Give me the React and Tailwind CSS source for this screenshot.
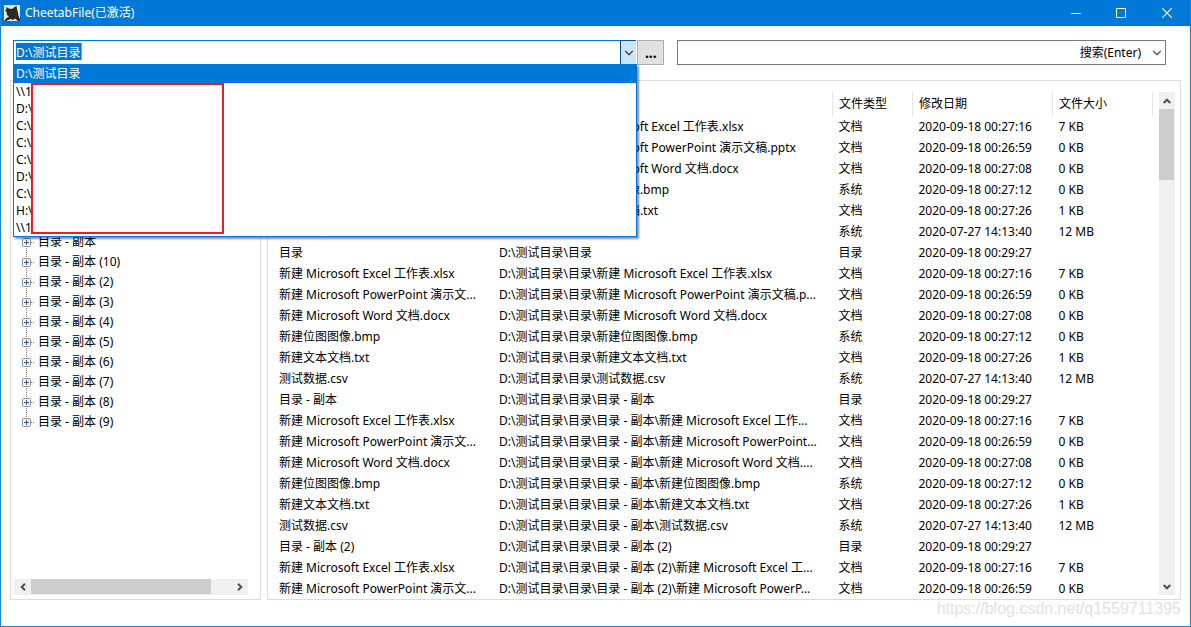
import { ChevronDown } from "lucide-react";

const ROOT = "D:\\测试目录\\";

const history = ["\\\\1", "D:\\", "C:\\", "C:\\", "C:\\", "D:\\", "C:\\", "H:\\", "\\\\1"];

const folders = [
  "目录 - 副本",
  "目录 - 副本 (10)",
  "目录 - 副本 (2)",
  "目录 - 副本 (3)",
  "目录 - 副本 (4)",
  "目录 - 副本 (5)",
  "目录 - 副本 (6)",
  "目录 - 副本 (7)",
  "目录 - 副本 (8)",
  "目录 - 副本 (9)",
];

const XLSX = ["文档", "2020-09-18 00:27:16", "7 KB"];
const PPTX = ["文档", "2020-09-18 00:26:59", "0 KB"];
const DOCX = ["文档", "2020-09-18 00:27:08", "0 KB"];
const BMP = ["系统", "2020-09-18 00:27:12", "0 KB"];
const TXT = ["文档", "2020-09-18 00:27:26", "1 KB"];
const CSV = ["系统", "2020-07-27 14:13:40", "12 MB"];
const DIR = ["目录", "2020-09-18 00:29:27", ""];

const files = [
  ["新建 Microsoft Excel 工作表.xlsx", "新建 Microsoft Excel 工作表.xlsx", XLSX],
  ["新建 Microsoft PowerPoint 演示文...", "新建 Microsoft PowerPoint 演示文稿.pptx", PPTX],
  ["新建 Microsoft Word 文档.docx", "新建 Microsoft Word 文档.docx", DOCX],
  ["新建位图图像.bmp", "新建位图图像.bmp", BMP],
  ["新建文本文档.txt", "新建文本文档.txt", TXT],
  ["测试数据.csv", "测试数据.csv", CSV],
  ["目录", "目录", DIR],
  ["新建 Microsoft Excel 工作表.xlsx", "目录\\新建 Microsoft Excel 工作表.xlsx", XLSX],
  ["新建 Microsoft PowerPoint 演示文...", "目录\\新建 Microsoft PowerPoint 演示文稿.p...", PPTX],
  ["新建 Microsoft Word 文档.docx", "目录\\新建 Microsoft Word 文档.docx", DOCX],
  ["新建位图图像.bmp", "目录\\新建位图图像.bmp", BMP],
  ["新建文本文档.txt", "目录\\新建文本文档.txt", TXT],
  ["测试数据.csv", "目录\\测试数据.csv", CSV],
  ["目录 - 副本", "目录\\目录 - 副本", DIR],
  ["新建 Microsoft Excel 工作表.xlsx", "目录\\目录 - 副本\\新建 Microsoft Excel 工作...", XLSX],
  ["新建 Microsoft PowerPoint 演示文...", "目录\\目录 - 副本\\新建 Microsoft PowerPoint...", PPTX],
  ["新建 Microsoft Word 文档.docx", "目录\\目录 - 副本\\新建 Microsoft Word 文档....", DOCX],
  ["新建位图图像.bmp", "目录\\目录 - 副本\\新建位图图像.bmp", BMP],
  ["新建文本文档.txt", "目录\\目录 - 副本\\新建文本文档.txt", TXT],
  ["测试数据.csv", "目录\\目录 - 副本\\测试数据.csv", CSV],
  ["目录 - 副本 (2)", "目录\\目录 - 副本 (2)", DIR],
  ["新建 Microsoft Excel 工作表.xlsx", "目录\\目录 - 副本 (2)\\新建 Microsoft Excel 工...", XLSX],
  ["新建 Microsoft PowerPoint 演示文...", "目录\\目录 - 副本 (2)\\新建 Microsoft PowerP...", PPTX],
];

function AppIcon() {
  return (
    <svg viewBox="0 0 16 16" className="size-4" aria-hidden="true">
      <rect width="16" height="16" fill="#e9e7e6" />
      <path d="M2 2l3 1.500 3 .5 2.500-2L12.500 1l.5 3 1 4 .5 3 1.500 3v2h-2l-3-2.500-2 1.500-2-1-3 1L2 16H0l2.500-3L5 11.500 3 10l-.5-3L1 5l1.500-.5z" fill="#2b2a29" />
    </svg>
  );
}

function Arrow({ className }) {
  return (
    <svg viewBox="0 0 8 8" className={"size-2 " + className} fill="none" stroke="#505050" strokeWidth="2" aria-hidden="true">
      <path d="M.7 2l3.300 3.300L7.300 2" />
    </svg>
  );
}

function TitleBar() {
  return (
    <header className="flex h-[26px] shrink-0 items-center bg-[#0078d7] pl-[3px] text-white">
      <AppIcon />
      <h1 className="ml-[5px] flex-1 text-[12px]">CheetabFile(已激活)</h1>
      <button type="button" aria-label="最小化" className="flex h-full w-[45px] items-center justify-center">
        <svg viewBox="0 0 10 10" className="size-[10px]" stroke="white" aria-hidden="true"><path d="M0 5.5h10" /></svg>
      </button>
      <button type="button" aria-label="最大化" className="flex h-full w-[45px] items-center justify-center">
        <svg viewBox="0 0 10 10" className="size-[10px]" fill="none" stroke="white" aria-hidden="true"><path d="M.5.5h9v9h-9z" /></svg>
      </button>
      <button type="button" aria-label="关闭" className="flex h-full w-[47px] items-center justify-center">
        <svg viewBox="0 0 10 10" className="size-[10px]" stroke="white" strokeWidth="1.2" aria-hidden="true"><path d="M0 0l10 10M10 0L0 10" /></svg>
      </button>
    </header>
  );
}

function PathCombo() {
  return (
    <div className="relative flex h-[25px] flex-[624] border border-r-0 border-[#0078d7] bg-white">
      <div className="flex min-w-0 flex-1 items-center pb-[2px] pl-[2px]">
        <input
          aria-label="路径"
          defaultValue="D:\测试目录"
          className="h-[17px] w-[66px] border-r border-[#f08030] bg-[#0078d7] text-white outline-none"
        />
      </div>
      <button type="button" aria-label="展开" className="-my-px flex w-4 items-center justify-center border-y border-l border-[#005499] bg-[#cce4f7]">
        <ChevronDown className="size-[14px] shrink-0 text-[#404040]" strokeWidth={2} />
      </button>
      <div className="absolute top-[23px] -right-px -left-px z-10 border border-[#0078d7] bg-white shadow-[2px_2px_2px_rgba(0,0,0,0.45)]">
        <ul role="listbox" aria-label="历史路径">
          <li role="option" aria-selected="true" className="h-[18px] bg-[#0078d7] pl-[2px] leading-[18px] text-white">D:\测试目录</li>
          {history.map((item, i) => (
            <li key={i} role="option" aria-selected="false" className="h-[17px] pl-[2px] leading-[17px]">{item}</li>
          ))}
        </ul>
        <div className="absolute top-[18px] left-[17px] h-[151px] w-[193px] border-2 border-[#ed1c24] bg-white" />
      </div>
    </div>
  );
}

function Toolbar() {
  return (
    <div className="flex shrink-0 pt-[14px] pr-[24px] pl-3">
      <PathCombo />
      <button type="button" aria-label="浏览" className="ml-px h-[25px] w-[27px] border border-[#adadad] bg-[#e1e1e1] text-[14px] font-bold leading-[22px]">...</button>
      <div className="ml-[13px] flex h-[25px] flex-[488] items-center border border-[#7a7a7a]">
        <input aria-label="搜索内容" className="h-full min-w-0 flex-1 px-1 outline-none" />
        <button type="button" className="flex items-center gap-[9px] pr-px">
          搜索(Enter)
          <ChevronDown className="size-[14px] text-[#505050]" strokeWidth={2} />
        </button>
      </div>
    </div>
  );
}

function TreePanel() {
  return (
    <aside className="flex w-[251px] shrink-0 flex-col border border-[#dcdcdc] pb-1 pl-[3px]">
      <ul className="flex-1 pt-[151px] pl-2">
        {folders.map((name, i) => (
          <li key={name} className="flex h-5 items-center">
            <svg viewBox="0 0 16 20" className="h-5 w-4" aria-hidden="true">
              <path d={i === folders.length - 1 ? "M4.5 0v6" : "M4.5 0v20"} stroke="#808080" strokeDasharray="1 1" />
              <path d="M9 10.5h4" stroke="#808080" strokeDasharray="1 1" />
              <rect x=".5" y="6.5" width="8" height="8" rx="1" fill="#f6f6f6" stroke="#919191" />
              <path d="M2 10.5h5M4.5 8v5" stroke="#3c5a9c" />
            </svg>
            <button type="button" className="leading-5">{name}</button>
          </li>
        ))}
      </ul>
      <div className="mr-3 flex h-4 bg-[#f0f0f0]">
        <button type="button" aria-label="向左滚动" className="flex w-[17px] items-center justify-center"><Arrow className="rotate-90" /></button>
        <div className="flex-1"><div className="h-[15px] w-[90%] bg-[#cdcdcd]" /></div>
        <button type="button" aria-label="向右滚动" className="flex w-[17px] items-center justify-center"><Arrow className="-rotate-90" /></button>
      </div>
    </aside>
  );
}

function FilePanel() {
  return (
    <main className="flex min-w-0 flex-1 overflow-hidden border border-[#dcdcdc] pt-[11px] pr-[5px] pb-1 pl-[5px]">
      <div className="min-h-0 flex-1 overflow-hidden">
        <table className="w-full table-fixed whitespace-nowrap text-left">
          <thead>
            <tr className="h-6">
              <th className="w-[220px] border-r border-[#e5e5e5] px-[6px] font-normal">文件名</th>
              <th className="border-r border-[#e5e5e5] px-[6px] font-normal">路径</th>
              <th className="w-20 border-r border-[#e5e5e5] px-[6px] font-normal">文件类型</th>
              <th className="w-[140px] border-r border-[#e5e5e5] px-[6px] font-normal">修改日期</th>
              <th className="w-[100px] border-r border-[#e5e5e5] px-[6px] font-normal">文件大小</th>
            </tr>
          </thead>
          <tbody>
            {files.map(([name, path, [type, date, size]], i) => (
              <tr key={i} className="h-[21px]">
                <td className="overflow-hidden px-[6px]">{name}</td>
                <td className="overflow-hidden px-[6px]">{ROOT + path}</td>
                <td className="px-[6px]">{type}</td>
                <td className="px-[6px]">{date}</td>
                <td className="px-[6px]">{size}</td>
              </tr>
            ))}
          </tbody>
        </table>
      </div>
      <div className="ml-[6px] flex w-4 flex-col bg-[#f0f0f0]">
        <button type="button" aria-label="向上滚动" className="flex h-[17px] items-center justify-center"><Arrow className="rotate-180" /></button>
        <div className="flex-1"><div className="h-[71px] w-[15px] bg-[#cdcdcd]" /></div>
        <button type="button" aria-label="向下滚动" className="flex h-[17px] items-center justify-center"><Arrow className="rotate-0" /></button>
      </div>
    </main>
  );
}

export default function App() {
  return (
    <div className="flex h-screen flex-col overflow-hidden border border-t-0 border-[#1883d7] bg-white font-['Noto_Sans','Noto_Sans_CJK_SC',sans-serif] text-[12px] leading-4 text-black">
      <TitleBar />
      <Toolbar />
      <div className="flex min-h-0 flex-1 gap-[6px] pt-[15px] pr-[9px] pl-[9px]">
        <TreePanel />
        <FilePanel />
      </div>
      <footer className="h-[26px] shrink-0 pr-[9px] text-right font-['Liberation_Sans',sans-serif] text-[16px] leading-[18px] text-[#e2e2e2]">
        https://blog.csdn.net/q1559711395
      </footer>
    </div>
  );
}
